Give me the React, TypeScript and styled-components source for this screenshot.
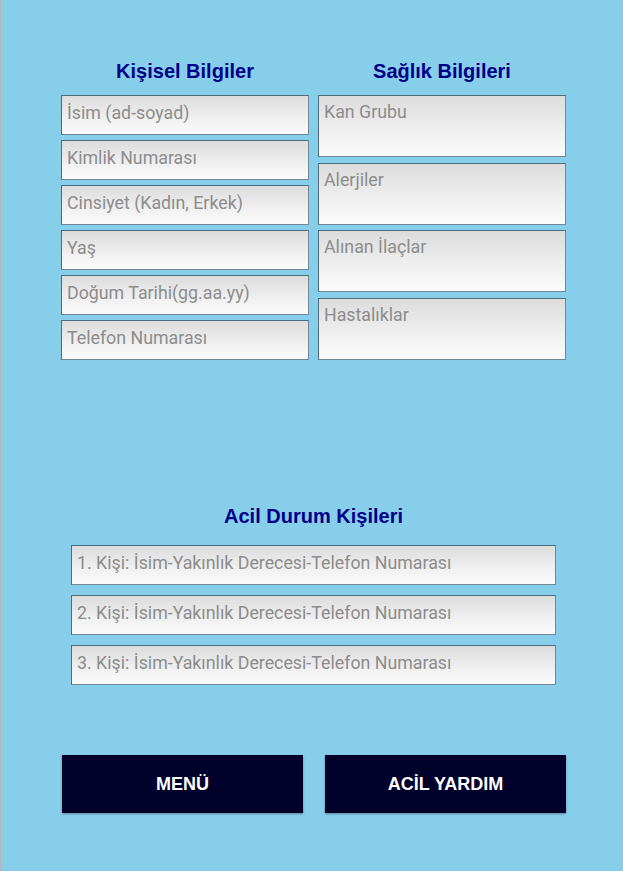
import React from "react";
import styled, { createGlobalStyle } from "styled-components";

const Global = createGlobalStyle`
  html, body { margin: 0; padding: 0; background: #87ceeb; }
  body { border-left: 1px solid #b4b4b4; min-height: 871px; box-sizing: border-box; }
  * { box-sizing: border-box; }
`;

const Page = styled.div`
  width: 622px;
  min-height: 871px;
  display: flex;
  flex-direction: column;
  background: #87ceeb;
  padding-top: 59px;
`;

const Columns = styled.div`
  display: flex;
  gap: 9px;
  padding: 0 57px 0 60px;
`;

const Column = styled.div`
  flex: 1;
  display: flex;
  flex-direction: column;
`;

const Heading = styled.h2`
  margin: 0 0 12px;
  height: 24px;
  line-height: 24px;
  text-align: center;
  font-family: "Liberation Sans", Arial, sans-serif;
  font-weight: bold;
  font-size: 20px;
  color: #000088;
`;

const Stack = styled.div<{ $gap: number }>`
  display: flex;
  flex-direction: column;
  gap: ${(p) => p.$gap}px;
`;

const fieldBase = `
  display: block;
  width: 100%;
  margin: 0;
  border: 1px solid #4d6b7f;
  border-bottom-color: #6f8797;
  border-right-color: #6f8797;
  background: linear-gradient(to bottom, #dcdcdc 0%, #f0f0f0 60%, #fbfbfb 100%);
  font-family: Roboto, "Noto Sans", sans-serif;
  font-size: 17.8px;
  color: #333;
  outline: none;
  &::placeholder { color: #8c8c8c; opacity: 1; }
`;

const Field = styled.input`
  ${fieldBase}
  height: 40px;
  padding: 0 5px 5px;
`;

const Area = styled.textarea`
  ${fieldBase}
  height: 62px;
  padding: 5px 5px;
  resize: none;
  line-height: 21px;
`;

const Emergency = styled.section`
  margin-top: 144px;
  padding: 0 67px 0 70px;
  display: flex;
  flex-direction: column;
`;

const EmergencyHeading = styled(Heading)`
  margin-bottom: 17px;
`;

const Buttons = styled.div`
  display: flex;
  gap: 22px;
  padding: 0 57px 0 61px;
  margin-top: 70px;
`;

const Button = styled.button`
  flex: 1;
  height: 58px;
  border: none;
  background: #00002a;
  color: #fff;
  font-family: "Liberation Sans", Arial, sans-serif;
  font-weight: bold;
  font-size: 18px;
  box-shadow: 0 1px 2px rgba(0, 0, 0, 0.35);
  cursor: pointer;
`;

const personal = [
  "İsim (ad-soyad)",
  "Kimlik Numarası",
  "Cinsiyet (Kadın, Erkek)",
  "Yaş",
  "Doğum Tarihi(gg.aa.yy)",
  "Telefon Numarası",
];

const health = ["Kan Grubu", "Alerjiler", "Alınan İlaçlar", "Hastalıklar"];

export default function App() {
  return (
    <>
      <Global />
      <Page>
        <Columns>
          <Column>
            <Heading>Kişisel Bilgiler</Heading>
            <Stack $gap={5}>
              {personal.map((p) => (
                <Field key={p} placeholder={p} />
              ))}
            </Stack>
          </Column>
          <Column>
            <Heading>Sağlık Bilgileri</Heading>
            <Stack $gap={5.5}>
              {health.map((p) => (
                <Area key={p} placeholder={p} />
              ))}
            </Stack>
          </Column>
        </Columns>
        <Emergency>
          <EmergencyHeading>Acil Durum Kişileri</EmergencyHeading>
          <Stack $gap={10}>
            {[1, 2, 3].map((n) => (
              <Field key={n} placeholder={`${n}. Kişi: İsim-Yakınlık Derecesi-Telefon Numarası`} />
            ))}
          </Stack>
        </Emergency>
        <Buttons>
          <Button>MENÜ</Button>
          <Button>ACİL YARDIM</Button>
        </Buttons>
      </Page>
    </>
  );
}
